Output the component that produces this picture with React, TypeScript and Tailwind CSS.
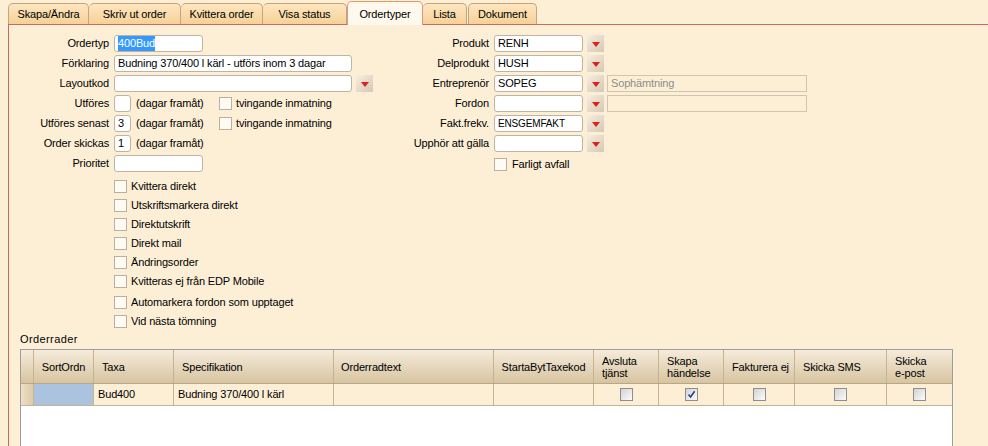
import type { ReactNode } from "react";

function DropBtn() {
  return (
    <div className="ml-[4px] flex h-[17px] w-[17px] items-center justify-center bg-gradient-to-br from-[#f6eee0] to-[#d6c9b4]">
      <svg width="8" height="5" viewBox="0 0 8 5" className="mt-[2px]">
        <polygon points="0,0 8,0 4,5" fill="#e1201a" />
      </svg>
    </div>
  );
}

function Field({ w, children }: { w: string; children?: ReactNode }) {
  return (
    <div
      className={`${w} flex h-[17px] items-center overflow-hidden whitespace-nowrap rounded-[3px] border border-[#bdb4a4] bg-white px-[3px]`}
    >
      {children}
    </div>
  );
}

function Box() {
  return <div className="h-[13px] w-[13px] shrink-0 border border-[#b8b0a2] bg-[#fffbf3]" />;
}

function Row({ label, lw, children }: { label: string; lw: string; children: ReactNode }) {
  return (
    <div className="mb-[3px] flex h-[17px] items-center">
      <div className={`${lw} shrink-0 pr-[5px] text-right whitespace-nowrap`}>{label}</div>
      {children}
    </div>
  );
}

function Check({ label, mt }: { label: string; mt: string }) {
  return (
    <div className={`${mt} flex h-[13px] items-center gap-[4px] whitespace-nowrap`}>
      <Box />
      <span>{label}</span>
    </div>
  );
}

function CellBox({ checked }: { checked?: boolean }) {
  return (
    <div className="flex h-[13px] w-[13px] items-center justify-center border border-[#8e8e8e] bg-gradient-to-br from-[#d4d4d4] to-[#fbfbfb]">
      {checked && (
        <svg width="9" height="9" viewBox="0 0 9 9">
          <path d="M1.5 4.5 L3.6 7 L7.6 1.2" fill="none" stroke="#2c3c8c" strokeWidth="1.6" />
        </svg>
      )}
    </div>
  );
}

const cols = [
  { w: "w-[60px]", label: "SortOrdn", cls: "justify-center" },
  { w: "w-[80px]", label: "Taxa", cls: "pl-[8px]" },
  { w: "w-[160px]", label: "Specifikation", cls: "pl-[8px]" },
  { w: "w-[160px]", label: "Orderradtext", cls: "pl-[7px]" },
  { w: "w-[100px]", label: "StartaBytTaxekod", cls: "justify-center" },
  { w: "w-[65px]", label: "Avsluta\ntjänst", cls: "pl-[8px]" },
  { w: "w-[65px]", label: "Skapa\nhändelse", cls: "pl-[8px]" },
  { w: "w-[71px]", label: "Fakturera ej", cls: "pl-[8px]" },
  { w: "w-[92px]", label: "Skicka SMS", cls: "pl-[8px]" },
  { w: "flex-1", label: "Skicka\ne-post", cls: "pl-[8px]" },
];

export default function App() {
  return (
    <div className="h-[446px] w-[988px] overflow-hidden bg-[#fdefd6] font-['Liberation_Sans',Arial,sans-serif] text-[11px] tracking-[-0.15px] text-black">
      {/* tabs */}
      <div className="flex h-[24px] items-end pl-[8px]">
        <div className="flex h-[21px] w-[81px] items-center justify-center rounded-t-[5px] border border-b-0 border-[#c6a57c] bg-gradient-to-b from-[#fde6c0] to-[#f6d197]">
          Skapa/Ändra
        </div>
        <div className="flex h-[21px] w-[92px] items-center justify-center rounded-t-[5px] border border-b-0 border-l-0 border-[#c6a57c] bg-gradient-to-b from-[#fde6c0] to-[#f6d197]">
          Skriv ut order
        </div>
        <div className="flex h-[21px] w-[82px] items-center justify-center rounded-t-[5px] border border-b-0 border-l-0 border-[#c6a57c] bg-gradient-to-b from-[#fde6c0] to-[#f6d197]">
          Kvittera order
        </div>
        <div className="flex h-[21px] w-[84px] items-center justify-center rounded-t-[5px] border border-b-0 border-l-0 border-[#c6a57c] bg-gradient-to-b from-[#fde6c0] to-[#f6d197]">
          Visa status
        </div>
        <div className="relative z-10 -mb-px flex h-[24px] w-[76px] items-center justify-center rounded-t-[5px] border border-b-0 border-[#d29a86] border-t-[#e2986a] bg-[#fff8ec] pt-[2px]">
          Ordertyper
        </div>
        <div className="flex h-[21px] w-[44px] items-center justify-center rounded-t-[5px] border border-b-0 border-l-0 border-[#c6a57c] bg-gradient-to-b from-[#fde6c0] to-[#f6d197]">
          Lista
        </div>
        <div className="ml-[1px] flex h-[21px] w-[69px] items-center justify-center rounded-t-[5px] border border-b-0 border-[#c6a57c] bg-gradient-to-b from-[#fde6c0] to-[#f6d197]">
          Dokument
        </div>
      </div>

      {/* panel */}
      <div className="ml-[8px] h-[422px] border-l border-t border-[#c96a62] pt-[10px]">
        <div className="flex">
          {/* left column */}
          <div className="w-[371px] shrink-0">
            <Row label="Ordertyp" lw="w-[105px]">
              <Field w="w-[89px]">
                <span className="bg-[#3399ff] text-white">400Bud</span>
              </Field>
            </Row>
            <Row label="Förklaring" lw="w-[105px]">
              <Field w="w-[238px]">Budning 370/400 l kärl - utförs inom 3 dagar</Field>
            </Row>
            <Row label="Layoutkod" lw="w-[105px]">
              <Field w="w-[238px]" />
              <DropBtn />
            </Row>
            <Row label="Utföres" lw="w-[105px]">
              <Field w="w-[17px]" />
              <span className="ml-[5px] w-[83px]">(dagar framåt)</span>
              <Box />
              <span className="ml-[4px]">tvingande inmatning</span>
            </Row>
            <Row label="Utföres senast" lw="w-[105px]">
              <Field w="w-[17px]">3</Field>
              <span className="ml-[5px] w-[83px]">(dagar framåt)</span>
              <Box />
              <span className="ml-[4px]">tvingande inmatning</span>
            </Row>
            <Row label="Order skickas" lw="w-[105px]">
              <Field w="w-[17px]">1</Field>
              <span className="ml-[5px]">(dagar framåt)</span>
            </Row>
            <Row label="Prioritet" lw="w-[105px]">
              <Field w="w-[89px]" />
            </Row>

            <div className="pl-[105px]">
              <Check label="Kvittera direkt" mt="mt-[8px]" />
              <Check label="Utskriftsmarkera direkt" mt="mt-[6px]" />
              <Check label="Direktutskrift" mt="mt-[6px]" />
              <Check label="Direkt mail" mt="mt-[6px]" />
              <Check label="Ändringsorder" mt="mt-[6px]" />
              <Check label="Kvitteras ej från EDP Mobile" mt="mt-[6px]" />
              <Check label="Automarkera fordon som upptaget" mt="mt-[8px]" />
              <Check label="Vid nästa tömning" mt="mt-[6px]" />
            </div>
          </div>

          {/* right column */}
          <div>
            <Row label="Produkt" lw="w-[114px]">
              <Field w="w-[89px]">RENH</Field>
              <DropBtn />
            </Row>
            <Row label="Delprodukt" lw="w-[114px]">
              <Field w="w-[89px]">HUSH</Field>
              <DropBtn />
            </Row>
            <Row label="Entreprenör" lw="w-[114px]">
              <Field w="w-[89px]">SOPEG</Field>
              <DropBtn />
              <div className="ml-[3px] flex h-[17px] w-[200px] items-center border border-[#cfc5b3] px-[3px] text-[#8c8c8c]">
                Sophämtning
              </div>
            </Row>
            <Row label="Fordon" lw="w-[114px]">
              <Field w="w-[89px]" />
              <DropBtn />
              <div className="ml-[3px] h-[17px] w-[200px] border border-[#cfc5b3]" />
            </Row>
            <Row label="Fakt.frekv." lw="w-[114px]">
              <Field w="w-[89px]">
                <span className="text-[10px]">ENSGEMFAKT</span>
              </Field>
              <DropBtn />
            </Row>
            <Row label="Upphör att gälla" lw="w-[114px]">
              <Field w="w-[89px]" />
              <DropBtn />
            </Row>
            <div className="pl-[114px]">
              <div className="mt-[6px] flex h-[13px] items-center gap-[5px]">
                <Box />
                <span>Farligt avfall</span>
              </div>
            </div>
          </div>
        </div>

        {/* Orderrader */}
        <div className="ml-[11px] mt-[5px] h-[13px] leading-[13px] tracking-[0.4px]">Orderrader</div>
        <div className="ml-[11px] mt-[3px] h-[120px] w-[933px] border border-[#9d9d9d] bg-white">
          {/* header */}
          <div className="flex h-[34px] border-b border-[#b9a888] bg-gradient-to-b from-[#f6ecdb] to-[#d7c4a1]">
            <div className="w-[13px] shrink-0 border-r border-[#c6b391]" />
            {cols.map((c) => (
              <div
                key={c.label}
                className={`${c.w} ${c.cls} flex shrink-0 items-center overflow-hidden whitespace-pre border-r border-[#c6b391] leading-[12px] last:border-r-0`}
              >
                {c.label}
              </div>
            ))}
          </div>
          {/* data row */}
          <div className="flex h-[22px] border-b border-[#c4b394] bg-[#fdefd6]">
            <div className="w-[13px] shrink-0 border-r border-[#c6b391] bg-gradient-to-r from-[#eee0c6] to-[#dccaa8]" />
            <div className="w-[60px] shrink-0 border-r border-[#c6b391] bg-[#abc3df]" />
            <div className="flex w-[80px] shrink-0 items-center border-r border-[#c6b391] pl-[4px]">Bud400</div>
            <div className="flex w-[160px] shrink-0 items-center border-r border-[#c6b391] pl-[4px]">
              Budning 370/400 l kärl
            </div>
            <div className="w-[160px] shrink-0 border-r border-[#c6b391]" />
            <div className="w-[100px] shrink-0 border-r border-[#c6b391]" />
            <div className="flex w-[65px] shrink-0 items-center justify-center border-r border-[#c6b391]">
              <CellBox />
            </div>
            <div className="flex w-[65px] shrink-0 items-center justify-center border-r border-[#c6b391]">
              <CellBox checked />
            </div>
            <div className="flex w-[71px] shrink-0 items-center justify-center border-r border-[#c6b391]">
              <CellBox />
            </div>
            <div className="flex w-[92px] shrink-0 items-center justify-center border-r border-[#c6b391]">
              <CellBox />
            </div>
            <div className="flex flex-1 items-center justify-center">
              <CellBox />
            </div>
          </div>
        </div>
      </div>
    </div>
  );
}
